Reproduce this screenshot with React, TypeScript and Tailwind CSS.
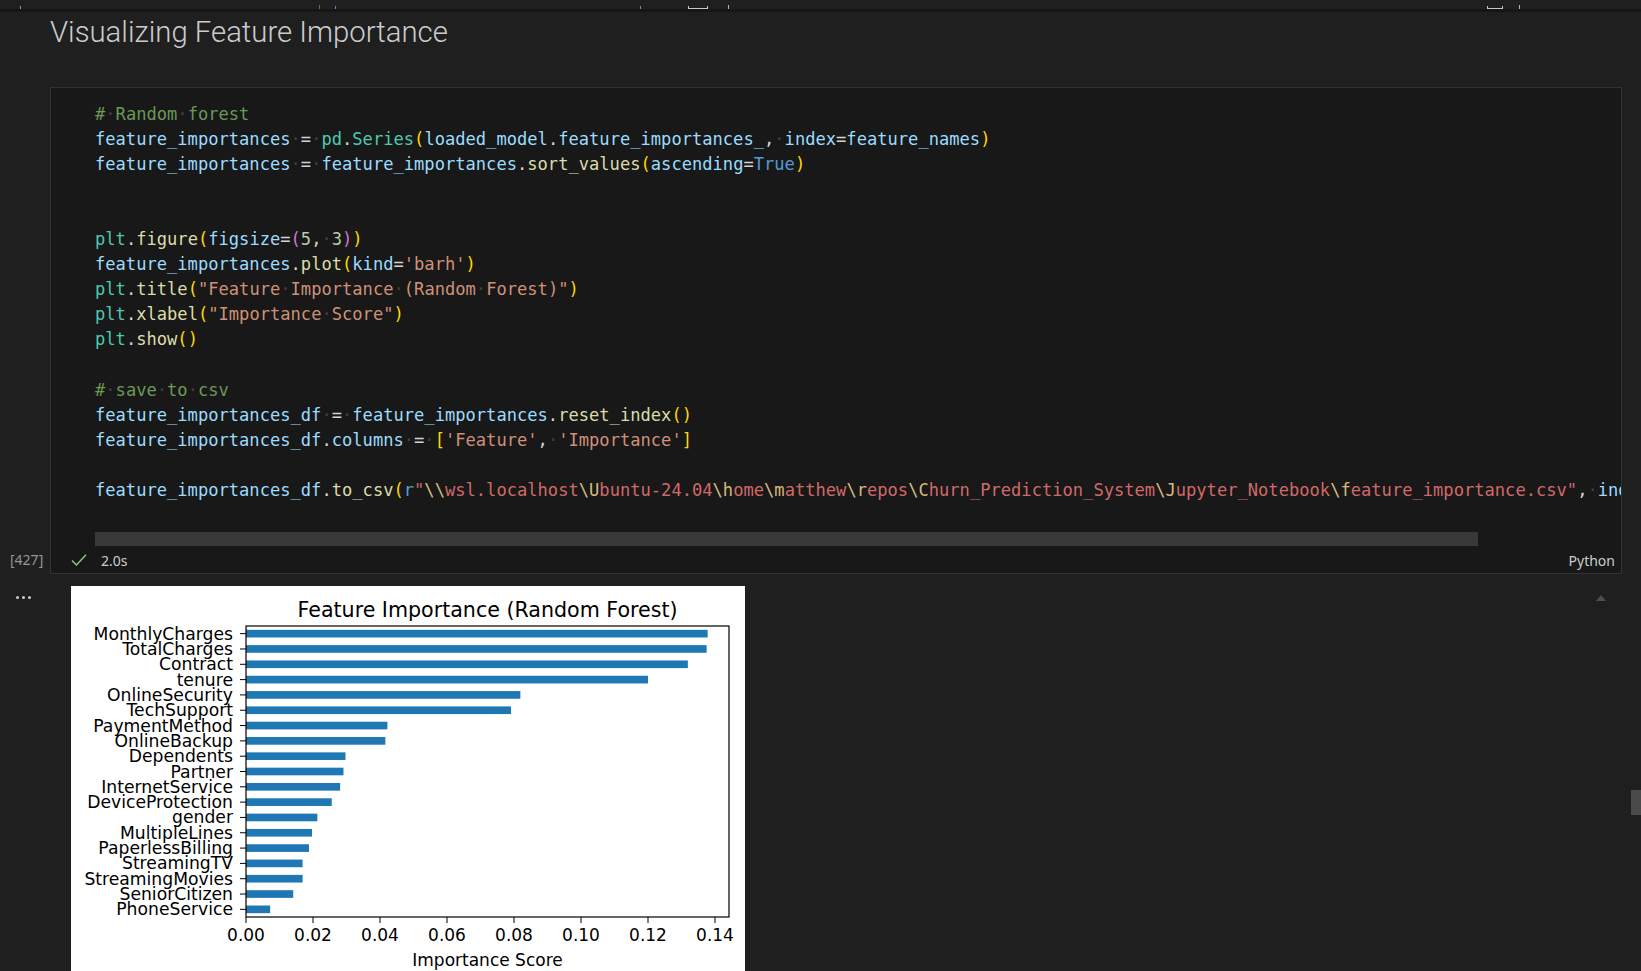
import React from 'react'

type Tok = [string, string]

const tone: Record<string, string> = {
  v: 'text-[#9cdcfe]',
  f: 'text-[#dcdcaa]',
  t: 'text-[#4ec9b0]',
  c: 'text-[#6a9955]',
  s: 'text-[#ce9178]',
  k: 'text-[#569cd6]',
  n: 'text-[#b5cea8]',
  o: 'text-[#d4d4d4]',
  b1: 'text-[#ffd700]',
  b2: 'text-[#da70d6]',
  x: 'text-[#d16969]',
  e: 'text-[#d7ba7d]',
}

const lines: Tok[][] = [
  [['c', '# Random forest']],
  [
    ['v', 'feature_importances'], ['o', ' = '], ['t', 'pd'], ['o', '.'], ['t', 'Series'], ['b1', '('],
    ['v', 'loaded_model'], ['o', '.'], ['v', 'feature_importances_'], ['o', ', '], ['v', 'index'], ['o', '='],
    ['v', 'feature_names'], ['b1', ')'],
  ],
  [
    ['v', 'feature_importances'], ['o', ' = '], ['v', 'feature_importances'], ['o', '.'], ['f', 'sort_values'],
    ['b1', '('], ['v', 'ascending'], ['o', '='], ['k', 'True'], ['b1', ')'],
  ],
  [],
  [],
  [
    ['t', 'plt'], ['o', '.'], ['f', 'figure'], ['b1', '('], ['v', 'figsize'], ['o', '='], ['b2', '('], ['n', '5'],
    ['o', ', '], ['n', '3'], ['b2', ')'], ['b1', ')'],
  ],
  [['v', 'feature_importances'], ['o', '.'], ['f', 'plot'], ['b1', '('], ['v', 'kind'], ['o', '='], ['s', "'barh'"], ['b1', ')']],
  [['t', 'plt'], ['o', '.'], ['f', 'title'], ['b1', '('], ['s', '"Feature Importance (Random Forest)"'], ['b1', ')']],
  [['t', 'plt'], ['o', '.'], ['f', 'xlabel'], ['b1', '('], ['s', '"Importance Score"'], ['b1', ')']],
  [['t', 'plt'], ['o', '.'], ['f', 'show'], ['b1', '()']],
  [],
  [['c', '# save to csv']],
  [['v', 'feature_importances_df'], ['o', ' = '], ['v', 'feature_importances'], ['o', '.'], ['f', 'reset_index'], ['b1', '()']],
  [
    ['v', 'feature_importances_df'], ['o', '.'], ['v', 'columns'], ['o', ' = '], ['b1', '['], ['s', "'Feature'"],
    ['o', ', '], ['s', "'Importance'"], ['b1', ']'],
  ],
  [],
  [
    ['v', 'feature_importances_df'], ['o', '.'], ['f', 'to_csv'], ['b1', '('], ['k', 'r'], ['x', '"'], ['e', '\\\\'],
    ['x', 'wsl.localhost'], ['e', '\\U'], ['x', 'buntu-24.04'], ['e', '\\h'], ['x', 'ome'], ['e', '\\m'],
    ['x', 'atthew'], ['e', '\\r'], ['x', 'epos'], ['e', '\\C'], ['x', 'hurn_Prediction_System'], ['e', '\\J'],
    ['x', 'upyter_Notebook'], ['e', '\\f'], ['x', 'eature_importance.csv"'], ['o', ', '], ['v', 'index'],
    ['o', '='], ['k', 'False'], ['b1', ')'],
  ],
]

// spaces are drawn as dim dots, like VS Code's "render whitespace"
function Token({ kind, text }: { kind: string; text: string }) {
  const parts = text.split(' ')
  return (
    <span className={tone[kind]}>
      {parts.map((p, i) => (
        <React.Fragment key={i}>
          {i > 0 && <span className="text-[#404040]">·</span>}
          {p}
        </React.Fragment>
      ))}
    </span>
  )
}

const features: [string, number][] = [
  ['MonthlyCharges', 0.1378],
  ['TotalCharges', 0.1375],
  ['Contract', 0.1319],
  ['tenure', 0.12],
  ['OnlineSecurity', 0.0819],
  ['TechSupport', 0.0791],
  ['PaymentMethod', 0.0422],
  ['OnlineBackup', 0.0416],
  ['Dependents', 0.0297],
  ['Partner', 0.0291],
  ['InternetService', 0.0281],
  ['DeviceProtection', 0.0256],
  ['gender', 0.0213],
  ['MultipleLines', 0.0197],
  ['PaperlessBilling', 0.0188],
  ['StreamingTV', 0.0169],
  ['StreamingMovies', 0.0169],
  ['SeniorCitizen', 0.0141],
  ['PhoneService', 0.0072],
]

function Chart() {
  const left = 175
  const right = 658
  const top = 40
  const bottom = 331
  const step = (bottom - top) / 19
  const perUnit = 3350
  const font = { fontFamily: '"DejaVu Sans", sans-serif' }
  return (
    <svg width="674" height="400" viewBox="0 0 674 400">
      <text x="416.5" y="30.5" fontSize="20.6" textAnchor="middle" fill="#000" style={font}>
        Feature Importance (Random Forest)
      </text>
      {features.map(([name, v], i) => {
        const cy = top + (i + 0.5) * step
        return (
          <g key={name}>
            <rect x={left} y={cy - step / 4} width={v * perUnit} height={step / 2} fill="#1f77b4" />
            <line x1={left - 6} x2={left} y1={cy} y2={cy} stroke="#000" strokeWidth="1" />
            <text x={left - 13} y={cy + 6} fontSize="17.2" textAnchor="end" fill="#000" style={font}>
              {name}
            </text>
          </g>
        )
      })}
      <rect x={left} y={top} width={right - left} height={bottom - top} fill="none" stroke="#000" strokeWidth="1.2" />
      {[0, 1, 2, 3, 4, 5, 6, 7].map((k) => {
        const x = left + k * 67
        return (
          <g key={k}>
            <line x1={x} x2={x} y1={bottom} y2={bottom + 6} stroke="#000" strokeWidth="1" />
            <text x={x} y={bottom + 24} fontSize="17" textAnchor="middle" fill="#000" style={font}>
              {(k * 0.02).toFixed(2)}
            </text>
          </g>
        )
      })}
      <text x="416.5" y="380" fontSize="17" textAnchor="middle" fill="#000" style={font}>
        Importance Score
      </text>
    </svg>
  )
}

export default function App() {
  return (
    <div className="relative w-[1641px] h-[971px] overflow-hidden bg-[#1f1f1f] font-['Noto_Sans',sans-serif]">
      {/* cut-off toolbar */}
      <div className="h-[9px] flex items-end">
        <div className="ml-[20px] w-px h-[3px] bg-[#9a9a9a]" />
        <div className="ml-[298px] w-px h-[4px] bg-[#6a6a6a]" />
        <div className="ml-[15px] w-px h-[3px] bg-[#4a8ad8]" />
        <div className="ml-[304px] w-px h-[3px] bg-[#8a8a8a]" />
        <div className="ml-[47px] w-[20px] h-[3px] border-b border-x border-[#c8c8c8]" />
        <div className="ml-[20px] w-px h-[4px] bg-[#9cb8dc]" />
        <div className="ml-[758px] w-[16px] h-[3px] border-b border-x border-[#c8c8c8]" />
        <div className="ml-[16px] w-px h-[4px] bg-[#9cb8dc]" />
      </div>
      <div className="h-[3px] bg-[#161616]" />

      <div className="pl-[50px] pt-[0px] h-[75px]">
        <h2 className="text-[29.3px] leading-[40px] font-light text-[#cccccc] font-['Roboto',sans-serif]">
          Visualizing Feature Importance
        </h2>
      </div>

      {/* code cell */}
      <div className="flex">
        <div className="w-[50px] shrink-0 flex flex-col justify-end pb-[4px]">
          <span className="pl-[10px] text-[14px] text-[#969696] leading-[20px]">[427]</span>
        </div>
        <div className="w-[1572px] border border-[#323232] bg-[#181818]">
          <div className="pt-[13.5px] pl-[44px] overflow-hidden whitespace-pre font-['DejaVu_Sans_Mono',monospace] text-[17.1px] leading-[25.1px]">
            {lines.map((toks, i) => (
              <div key={i} className="h-[25.1px]">
                {toks.map(([k, t], j) => (
                  <Token key={j} kind={k} text={t} />
                ))}
              </div>
            ))}
          </div>
          <div className="pt-[29px] pl-[44px]">
            <div className="w-[1383px] h-[14px] bg-[#393939]" />
          </div>
          <div className="h-[27px] flex items-center pt-[1px] pl-[19px] pr-[6px]">
            <svg width="18" height="18" viewBox="0 0 18 18" className="shrink-0">
              <path d="M2 9.6 L6.4 14 L16 3.8" fill="none" stroke="#89d185" strokeWidth="1.4" />
            </svg>
            <span className="ml-[13px] text-[14px] text-[#cccccc]">2.0s</span>
            <span className="ml-auto text-[14px] text-[#cccccc]">Python</span>
          </div>
        </div>
      </div>

      {/* output */}
      <div className="flex mt-[12px]">
        <div className="w-[50px] shrink-0 pl-[16px] pt-[1px]">
          <div className="flex gap-[3px] h-[20px] items-center">
            <span className="w-[3px] h-[3px] rounded-full bg-[#cccccc]" />
            <span className="w-[3px] h-[3px] rounded-full bg-[#cccccc]" />
            <span className="w-[3px] h-[3px] rounded-full bg-[#cccccc]" />
          </div>
        </div>
        <div className="ml-[21px] w-[674px] h-[400px] bg-white shrink-0">
          <Chart />
        </div>
        <div className="ml-auto mr-[35px] pt-[9px]">
          <div className="w-0 h-0 border-x-[5px] border-x-transparent border-b-[6px] border-b-[#4d4d4d]" />
        </div>
      </div>

      {/* overlay scrollbar thumb */}
      <div className="absolute right-0 top-[790px] w-[10px] h-[25px] bg-[#4a4a4a]" />
    </div>
  )
}
